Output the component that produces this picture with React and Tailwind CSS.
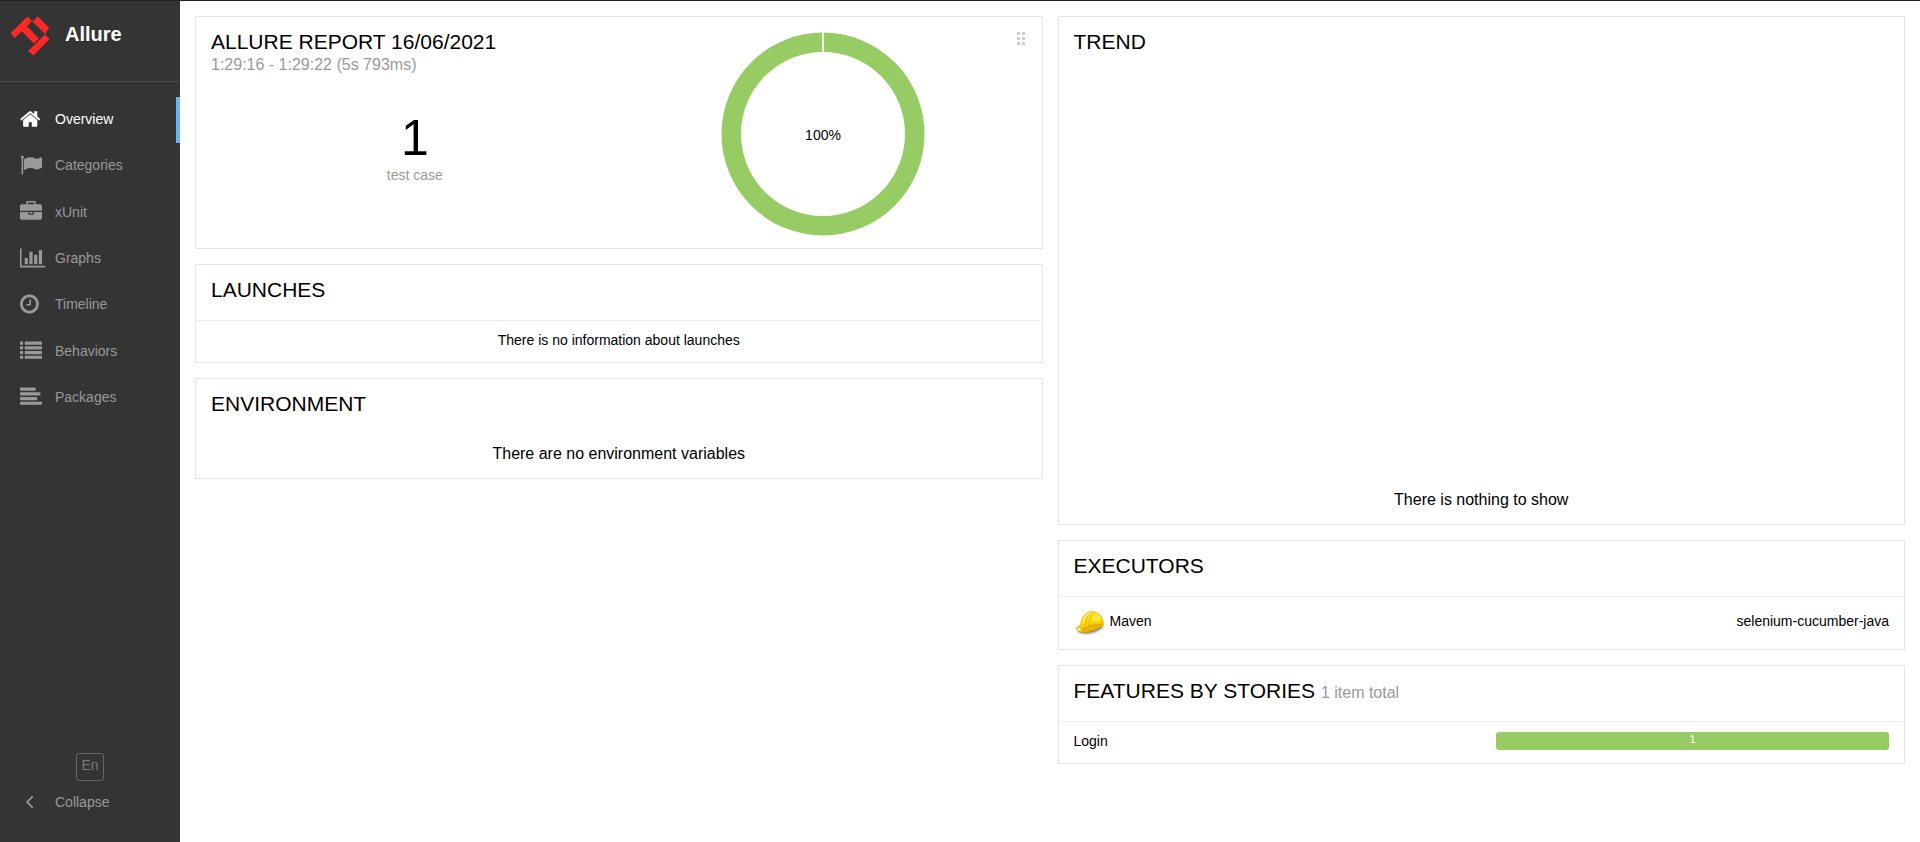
import React from "react";

const NAV = [
  {
    label: "Overview",
    active: true,
    box: "64 0 1792 1792",
    d: "M1472 992v480q0 26-19 45t-45 19h-384v-384h-256v384h-384q-26 0-45-19t-19-45v-480q0-1 .5-3t.5-3l575-474 575 474q1 2 1 6zm223-69l-62 74q-8 9-21 11h-3q-13 0-21-7l-692-577-692 577q-12 8-24 7-13-2-21-11l-62-74q-8-10-7-23.5t11-21.5l719-599q32-26 76-26t76 26l244 204v-195q0-14 9-23t23-9h192q14 0 23 9t9 23v408l219 182q10 8 11 21.5t-7 23.5z",
  },
  {
    label: "Categories",
    box: "0 0 1792 1792",
    d: "M320 256q0 72-64 110v1266q0 13-9.5 22.5t-22.5 9.5h-64q-13 0-22.5-9.5t-9.5-22.5v-1266q-64-38-64-110 0-53 37.5-90.5t90.5-37.5 90.5 37.5 37.5 90.5zm1472 64v763q0 25-12.5 38.5t-39.5 27.5q-215 116-369 116-61 0-123.5-22t-108.5-48-115.5-48-142.5-22q-192 0-464 146-17 9-33 9-26 0-45-19t-19-45v-742q0-32 31-55 21-14 79-43 236-120 421-120 107 0 200 29t219 88q38 19 88 19 54 0 117.5-21t110-47 88-47 54.5-21q26 0 45 19t19 45z",
  },
  {
    label: "xUnit",
    box: "0 0 1792 1792",
    d: "M640 256h512v-128h-512v128zm1152 640v480q0 66-47 113t-113 47h-1472q-66 0-113-47t-47-113v-480h672v160q0 26 19 45t45 19h320q26 0 45-19t19-45v-160h672zm-768 0v128h-256v-128h256zm768-480v384h-1792v-384q0-66 47-113t113-47h352v-160q0-40 28-68t68-28h576q40 0 68 28t28 68v160h352q66 0 113 47t47 113z",
  },
  {
    label: "Graphs",
    box: "0 0 1792 1792",
    d: "M640 896v512h-256v-512h256zm384-512v1024h-256v-1024h256zm1024 1152v128h-2048v-1536h128v1408h1920zm-640-896v768h-256v-768h256zm384-384v1152h-256v-1152h256z",
  },
  {
    label: "Timeline",
    box: "128 0 1792 1792",
    d: "M1024 544v448q0 14-9 23t-23 9h-320q-14 0-23-9t-9-23v-64q0-14 9-23t23-9h224v-352q0-14 9-23t23-9h64q14 0 23 9t9 23zm416 352q0-148-73-273t-198-198-273-73-273 73-198 198-73 273 73 273 198 198 273 73 273-73 198-198 73-273zm224 0q0 209-103 385.5t-279.5 279.5-385.5 103-385.5-103-279.5-279.5-103-385.5 103-385.5 279.5-279.5 385.5-103 385.5 103 279.5 279.5 103 385.5z",
  },
  {
    label: "Behaviors",
    box: "0 0 1792 1792",
    d: "M32 1280h192q32 0 32 32v192q0 32-32 32h-192q-32 0-32-32v-192q0-32 32-32zM32 896h192q32 0 32 32v192q0 32-32 32h-192q-32 0-32-32v-192q0-32 32-32zM32 512h192q32 0 32 32v192q0 32-32 32h-192q-32 0-32-32v-192q0-32 32-32zM32 128h192q32 0 32 32v192q0 32-32 32h-192q-32 0-32-32v-192q0-32 32-32zM416 1280h1344q32 0 32 32v192q0 32-32 32h-1344q-32 0-32-32v-192q0-32 32-32zM416 896h1344q32 0 32 32v192q0 32-32 32h-1344q-32 0-32-32v-192q0-32 32-32zM416 512h1344q32 0 32 32v192q0 32-32 32h-1344q-32 0-32-32v-192q0-32 32-32zM416 128h1344q32 0 32 32v192q0 32-32 32h-1344q-32 0-32-32v-192q0-32 32-32z",
  },
  {
    label: "Packages",
    box: "0 0 1792 1792",
    d: "M64 1280h1664q64 0 64 64v128q0 64-64 64h-1664q-64 0-64-64v-128q0-64 64-64zM64 896h1280q64 0 64 64v128q0 64-64 64h-1280q-64 0-64-64v-128q0-64 64-64zM64 512h1536q64 0 64 64v128q0 64-64 64h-1536q-64 0-64-64v-128q0-64 64-64zM64 128h1152q64 0 64 64v128q0 64-64 64h-1152q-64 0-64-64v-128q0-64 64-64z",
  },
];

function Icon({ box, d }) {
  return (
    <svg viewBox={box} className="size-[22px] shrink-0 overflow-visible fill-current" aria-hidden="true">
      <path d={d} />
    </svg>
  );
}

function Logo() {
  return (
    <svg viewBox="0 0 40 40" className="size-10 shrink-0" fill="#ff2826" aria-hidden="true">
      <path d="M17.500 .600l4.400 4.400-5 5.200 12.100 12.200-5.200 5.200-12-12.400-7.100 6.700-4.200-4.600z" />
      <path d="M27.700 .200l11.600 12-4.600 5.200-12-11.700z" />
      <path d="M21.500 5.300l.800-.8 1 1-.8.8zM34.200 17.500l.8-.8 .8 1.500-.8.800z" />
      <path d="M35 18.500l4.500 4.700-16.200 16.400-5.100-4.700z" />
    </svg>
  );
}

function Sidebar() {
  return (
    <aside className="flex w-[180px] shrink-0 flex-col bg-[#343434] text-sm text-[#999]">
      <a href="#" className="flex h-[81px] items-start gap-[15px] border-b border-[#4d4d4d] pt-[15px] pl-[10px] text-xl font-bold text-white">
        <Logo />
        <span className="leading-9">Allure</span>
      </a>
      <nav className="mt-[15px] grid h-[324px] auto-rows-fr">
        {NAV.map(({ label, active, box, d }) => (
          <a
            key={label}
            href="#"
            className={
              active
                ? "flex items-center border-r-4 border-[#64b5f6] pb-[2px] pl-5 text-white"
                : "flex items-center pb-[2px] pl-5"
            }
          >
            <span className="flex w-[35px]">
              <Icon box={box} d={d} />
            </span>
            {label}
          </a>
        ))}
      </nav>
      <div className="mt-auto flex flex-col pb-[29px]">
        <button type="button" className="size-7 self-center rounded-[3px] border border-[#666] pb-1 leading-5 text-[#777]">
          En
        </button>
        <button type="button" className="mt-[10px] flex h-[22px] items-center pl-5 text-left">
          <span className="flex w-[35px]">
            <Icon
              box="128 64 1792 1792"
              d="M1203 544q0 13-10 23l-393 393 393 393q10 10 10 23t-10 23l-50 50q-10 10-23 10t-23-10l-466-466q-10-10-10-23t10-23l466-466q10-10 23-10t23 10l50 50q10 10 10 23z"
            />
          </span>
          Collapse
        </button>
      </div>
    </aside>
  );
}

function Card({ children, className = "" }) {
  return <section className={`border border-[#e5e5e5] ${className}`}>{children}</section>;
}

function Title({ children }) {
  return <h2 className="h-[55px] px-[15px] pt-3 text-[21px] leading-[26px]">{children}</h2>;
}

function Donut() {
  return (
    <svg viewBox="0 0 204 204" className="size-[204px]" role="img" aria-label="100%">
      <circle cx="102" cy="102" r="91.75" fill="none" stroke="#97cc64" strokeWidth="19.5" />
      <path d="M102 0v21" stroke="#fff" strokeWidth="1.6" />
      <text x="102" y="108" textAnchor="middle" fontSize="14" fill="#000">
        100%
      </text>
    </svg>
  );
}

function HardHat() {
  return (
    <svg viewBox="0 0 28 24" className="h-6 w-7 overflow-visible" aria-hidden="true">
      <defs>
        <linearGradient id="hat" x1="0.3" y1="0" x2="0.6" y2="1">
          <stop offset="0" stopColor="#ffec45" />
          <stop offset="0.55" stopColor="#fdd400" />
          <stop offset="1" stopColor="#dea200" />
        </linearGradient>
        <filter id="soft" x="-20%" y="-50%" width="140%" height="200%">
          <feGaussianBlur stdDeviation="0.8" />
        </filter>
      </defs>
      <path d="M2 21q6 3 14 1q7-2 11.500-6l-2-2-22 5z" fill="#444" opacity="0.7" filter="url(#soft)" />
      <path
        d="M4.800 12.500C5.500 6 9.500 .700 16 .500C22.500 .400 27 5.500 27.400 12.500C27.500 14.500 27 15 25.500 15.800C21 18.500 17 20 12.500 21C8.500 21.800 4.500 21.800 2 20.300C.300 19.300 0 17.500 .500 16.800C1.800 15.800 4 15 4.800 12.500z"
        fill="url(#hat)"
        stroke="#cf9c00"
        strokeWidth="0.5"
      />
      <path d="M.8 17.300C4 18.800 8.500 18.600 11.200 16.600C15 13.800 20 14.800 27 12.800" fill="none" stroke="#cb9300" strokeWidth="0.8" />
      <path d="M9.300 15.800C9.300 9 11.500 4.500 15.300 1.200M12.800 14.800C12.800 9 15 4.500 18.800 1.500" fill="none" stroke="#e3ad00" strokeWidth="0.7" />
      <path d="M6.800 12.500C7.500 8 9.800 4.500 13 2.700" fill="none" stroke="#fff7a8" strokeWidth="1" />
      <path d="M15.500 10C16 6 18 3.500 20.500 3.500C23 4 24.500 6.500 24.500 9C22 10.800 18.500 10.500 15.500 10z" fill="#fff24d" opacity="0.7" />
      <path d="M1 18q1-1 2.800-1l1.800 2q-2 1-4.200 0z" fill="#fff9cf" />
    </svg>
  );
}

export default function App() {
  return (
    <div className="flex min-h-screen border-t border-[#222] bg-white font-['Liberation_Sans',Arial,sans-serif] text-black">
      <Sidebar />
      <main className="grid min-w-0 flex-1 grid-cols-2 items-start gap-[15px] p-[15px]">
        <div className="flex flex-col gap-[15px]">
          <Card className="relative flex px-[15px] pb-3">
            <div className="flex-1 pt-3">
              <h2 className="text-[21px] leading-[26px]">ALLURE REPORT 16/06/2021</h2>
              <p className="leading-5 text-[#999]">1:29:16 - 1:29:22 (5s 793ms)</p>
              <div className="pt-9 text-center">
                <div className="text-[50px] leading-[54px]">1</div>
                <div className="text-sm text-[#999]">test case</div>
              </div>
            </div>
            <div className="flex flex-1 justify-center pt-[15px]">
              <Donut />
            </div>
            <svg viewBox="0 0 8 13" className="absolute top-[15px] right-[17px] h-[13px] w-2" fill="#ccc" aria-hidden="true">
              <path d="M0 0h3v3h-3zM5 0h3v3h-3zM0 5h3v3h-3zM5 5h3v3h-3zM0 10h3v3h-3zM5 10h3v3h-3z" />
            </svg>
          </Card>
          <Card>
            <Title>LAUNCHES</Title>
            <p className="border-t border-[#eceff1] px-[15px] pt-[9px] pb-[11px] text-center text-sm leading-[21px]">
              There is no information about launches
            </p>
          </Card>
          <Card>
            <Title>ENVIRONMENT</Title>
            <p className="px-[15px] pt-2 pb-3 text-center leading-6">There are no environment variables</p>
          </Card>
        </div>
        <div className="flex flex-col gap-[15px]">
          <Card>
            <Title>TREND</Title>
            <p className="px-[15px] pt-[416px] pb-3 text-center leading-6">There is nothing to show</p>
          </Card>
          <Card>
            <Title>EXECUTORS</Title>
            <div className="flex items-start justify-between border-t border-[#eceff1] px-[15px] py-[14px] text-sm">
              <span className="flex items-start gap-[6px] pl-[2px]">
                <HardHat />
                Maven
              </span>
              <span>selenium-cucumber-java</span>
            </div>
          </Card>
          <Card>
            <Title>
              FEATURES BY STORIES <span className="text-base text-[#999]">1 item total</span>
            </Title>
            <table className="w-full table-fixed border-t border-[#eceff1] text-sm">
              <tbody>
                <tr>
                  <td className="w-1/2 px-[15px] pt-[9px] pb-[11px] leading-[21px]">
                    <a href="#">Login</a>
                  </td>
                  <td className="w-1/2 px-[15px] align-top">
                    <div className="mt-[10px] h-[18px] rounded-[3px] bg-[#97cc64] text-center text-[11px] leading-[14px] text-white">
                      1
                    </div>
                  </td>
                </tr>
              </tbody>
            </table>
          </Card>
        </div>
      </main>
    </div>
  );
}
